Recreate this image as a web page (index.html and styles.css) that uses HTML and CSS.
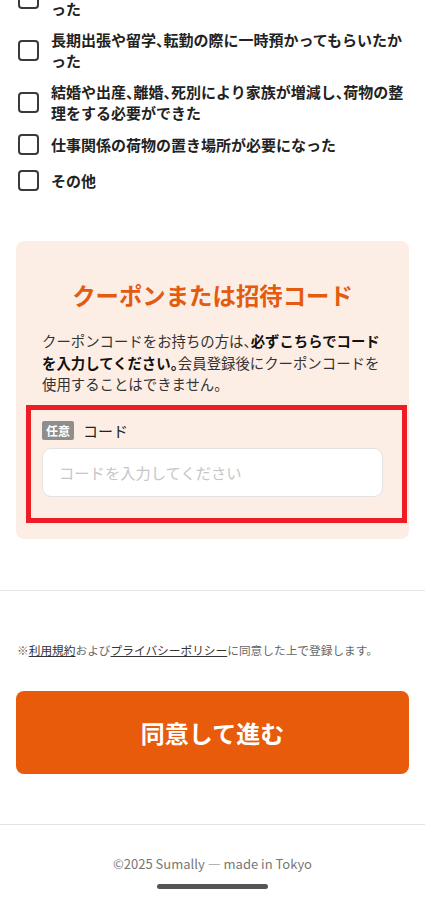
FILE: index.html
```html
<!DOCTYPE html>
<html lang="ja">
<head>
    <meta charset="utf-8">
    <link rel="stylesheet" href="styles.css">
</head>
<body>
<div class="page">
    <div class="reasons">
        <label class="reason"><span class="box"></span><span class="reason-text">引っ越しや模様替えの期間、一時的に荷物を預けたかった</span></label>
        <label class="reason"><span class="box"></span><span class="reason-text">長期出張や留学、転勤の際に一時預かってもらいたかった</span></label>
        <label class="reason"><span class="box"></span><span class="reason-text">結婚や出産、離婚、死別により家族が増減し、荷物の整理をする必要ができた</span></label>
        <label class="reason"><span class="box"></span><span class="reason-text">仕事関係の荷物の置き場所が必要になった</span></label>
        <label class="reason"><span class="box"></span><span class="reason-text">その他</span></label>
    </div>

    <div class="coupon">
        <h2 class="coupon-title">クーポンまたは招待コード</h2>
        <p class="coupon-desc">クーポンコードをお持ちの方は、<b>必ずこちらでコードを入力してください。</b>会員登録後にクーポンコードを使用することはできません。</p>
        <div class="code-field">
            <div class="code-label"><span class="badge">任意</span>コード</div>
            <input class="code-input" type="text" placeholder="コードを入力してください">
        </div>
    </div>
</div>

<div class="divider"></div>

<div class="page">
    <p class="terms">※<a href="#">利用規約</a>および<a href="#">プライバシーポリシー</a>に同意した上で登録します。</p>
    <button class="submit">同意して進む</button>
</div>

<div class="divider footer-line"></div>

<footer class="footer">©2025 Sumally — made in Tokyo</footer>

<div class="home-bar"></div>
</body>
</html>
```

FILE: styles.css
```css
body {
    margin: 0;
    font-family: "Noto Sans CJK JP", "Noto Sans", sans-serif;
    font-feature-settings: "halt";
    color: #222;
    background-color: #fff;
}

.page {
    padding: 0 16px;
}

.reasons {
    display: flex;
    flex-direction: column;
    gap: 10px;
    margin-top: -23px;
    padding-left: 2px;
}

.reason {
    display: flex;
    align-items: center;
    gap: 12px;
    min-height: 22px;
}

.reason:last-child {
    margin-top: 4px;
}

.box {
    flex: none;
    width: 17px;
    height: 17px;
    border: 2px solid #3a3a3a;
    border-radius: 4px;
}

.reason-text {
    font-size: 15px;
    font-weight: bold;
    line-height: 21px;
    line-break: loose;
}

.coupon {
    margin-top: 50px;
    padding: 39px 26px 42px;
    background-color: #fdeee5;
    border-radius: 8px;
}

.coupon-title {
    margin: 0;
    text-align: center;
    font-size: 23.4px;
    line-height: 30px;
    font-weight: bold;
    color: #e35b10;
}

.coupon-desc {
    margin: 20px 0 0;
    font-size: 14.4px;
    line-height: 21.5px;
    color: #333;
}

.coupon-desc b {
    color: #111;
}

.code-field {
    position: relative;
    margin-top: 25px;
}

.code-field::after {
    content: "";
    position: absolute;
    top: -15px;
    bottom: -26px;
    left: -16px;
    right: -24px;
    border: 5px solid #ee1c25;
    pointer-events: none;
}

.code-label {
    display: flex;
    align-items: center;
    gap: 9px;
    font-size: 15px;
    line-height: 22px;
    color: #222;
}

.badge {
    padding: 0 4px;
    font-size: 12px;
    line-height: 19px;
    font-weight: bold;
    color: #fff;
    background-color: #8e8e8e;
    border-radius: 2px;
}

.code-input {
    display: block;
    box-sizing: border-box;
    width: 100%;
    height: 49px;
    margin-top: 6px;
    padding: 0 16px;
    font-family: inherit;
    font-size: 15.3px;
    border: 1px solid #e2e2e2;
    border-radius: 9px;
    background-color: #fff;
}

.code-input::placeholder {
    color: #c6c6c6;
}

.divider {
    height: 1px;
    margin-top: 51px;
    background-color: #e3e3e3;
}

.terms {
    margin: 50px 0 0 1px;
    font-size: 11.7px;
    line-height: 18px;
    color: #666;
    white-space: nowrap;
}

.terms a {
    color: #333;
    text-decoration: underline;
}

.submit {
    display: block;
    width: 100%;
    height: 83px;
    margin-top: 32px;
    font-family: inherit;
    font-size: 24px;
    font-weight: bold;
    color: #fff;
    background-color: #e75b0a;
    border: none;
    border-radius: 8px;
    cursor: pointer;
}

.footer-line {
    margin-top: 50px;
}

.footer {
    margin-top: 29px;
    text-align: center;
    font-size: 13px;
    line-height: 20px;
    color: #777;
}

.home-bar {
    position: fixed;
    left: 157px;
    top: 884px;
    width: 111px;
    height: 5px;
    border-radius: 3px;
    background-color: #555;
}
```
